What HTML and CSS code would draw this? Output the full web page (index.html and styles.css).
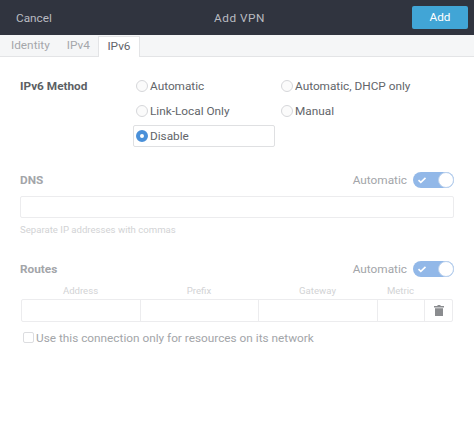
FILE: index.html
```html
<!DOCTYPE html>
<html lang="en">
<head>
<meta charset="utf-8">
<title>Add VPN</title>
<link rel="stylesheet" href="styles.css">
</head>
<body>
<header class="header">
  <span class="cancel">Cancel</span>
  <span class="title">Add VPN</span>
  <button class="add">Add</button>
</header>
<nav class="tabs">
  <span class="tab">Identity</span>
  <span class="tab">IPv4</span>
  <span class="tab active">IPv6</span>
</nav>
<main class="content">
  <section class="method">
    <div class="method-label">IPv6 Method</div>
    <div class="radios">
      <div class="radio"><i class="dot"></i>Automatic</div>
      <div class="radio"><i class="dot"></i>Automatic, DHCP only</div>
      <div class="radio"><i class="dot"></i>Link-Local Only</div>
      <div class="radio"><i class="dot"></i>Manual</div>
      <div class="radio selected"><i class="dot on"></i>Disable</div>
    </div>
  </section>
  <section class="dns">
    <div class="row-head">
      <span class="head">DNS</span>
      <span class="auto">Automatic<span class="switch"><svg class="tick" viewBox="0 0 10 8"><path d="M1.5 4.2 3.8 6.3 8.5 1.8" fill="none" stroke="#fff" stroke-width="1.6"/></svg><i class="knob"></i></span></span>
    </div>
    <div class="input"></div>
    <div class="hint">Separate IP addresses with commas</div>
  </section>
  <section class="routes">
    <div class="row-head">
      <span class="head">Routes</span>
      <span class="auto">Automatic<span class="switch"><svg class="tick" viewBox="0 0 10 8"><path d="M1.5 4.2 3.8 6.3 8.5 1.8" fill="none" stroke="#fff" stroke-width="1.6"/></svg><i class="knob"></i></span></span>
    </div>
    <div class="cols">
      <span class="c1">Address</span><span class="c2">Prefix</span><span class="c3">Gateway</span><span class="c4">Metric</span><span class="c5"></span>
    </div>
    <div class="table">
      <span class="c1"></span><span class="c2"></span><span class="c3"></span><span class="c4"></span>
      <span class="c5 trash"><svg width="10" height="11" viewBox="0 0 10 11"><path d="M3.5 0h3v1H10v1.4H0V1h3.5zM1 3.2h8V11H1z" fill="#8a8c8f"/></svg></span>
    </div>
    <label class="only"><i class="check"></i>Use this connection only for resources on its network</label>
  </section>
</main>
</body>
</html>
```
FILE: styles.css
```css
* { box-sizing: border-box; }
html, body { margin: 0; height: 100%; }
body {
  width: 474px; height: 424px; overflow: hidden; background: #fff;
  font-family: Roboto, "Open Sans", sans-serif; font-size: 11.8px; color: #62656a;
}
.header {
  height: 35px; background: #30343f; color: #b9bbc1;
  display: grid; grid-template-columns: 1fr auto 1fr; align-items: center;
  padding: 0 6px 0 16px;
}
.title { padding-right: 5px; letter-spacing: .5px; }
.add {
  justify-self: end; width: 56px; height: 23px; margin-top: -1px;
  background: #41a5d6; color: #fff; border: 0; border-radius: 2px;
  font: inherit;
}
.tabs {
  height: 22px; background: #f5f6f7; border-bottom: 1px solid #e3e4e6;
  display: flex; align-items: flex-end; padding-left: 2.5px; color: #a5a7ab;
}
.tab { height: 21px; padding: 2px 8.5px 0; line-height: 17px; }
.tab.active {
  height: 21px; margin-bottom: -1px; padding: 1px 8px 0;
  background: #fff; color: #62656a; border: 1px solid #e3e4e6; border-bottom: 0;
}
.content { padding: 0 20px; }
.method { display: flex; padding-top: 20px; }
.method-label { width: 113px; font-weight: 700; line-height: 18px; color: #5c5f64; }
.radios { display: grid; grid-template-columns: 145px auto; grid-auto-rows: 24.5px; }
.radio { display: flex; align-items: flex-start; line-height: 18px; padding-left: 3px; height: 22px; }
.radio.selected { width: 142px; border: 1px solid #dfe0e2; border-radius: 2px; margin-top: -1px; padding: 1px 0 0 2px; }
.dot { width: 12px; height: 12px; margin: 3px 2px 0 0; border-radius: 50%; border: 1px solid #d6d7da; background: #fbfbfb; }
.dot.on { background: #fff; border: 4px solid #4a90d9; }
.dns { margin-top: 20px; }
.row-head { display: flex; justify-content: space-between; align-items: center; height: 18px; }
.head { font-weight: 700; color: #a3a5a9; }
.auto { display: flex; align-items: center; color: #a3a5a9; }
.switch { position: relative; width: 41px; height: 16px; border-radius: 8px; background: #92b8e8; margin-left: 6px; display: block; }
.tick { position: absolute; left: 4px; top: 4px; width: 10px; height: 8px; }
.knob { position: absolute; right: 0; top: 0; width: 16px; height: 16px; border-radius: 50%; background: #fff; border: 1px solid #bcd2ee; }
.input { height: 22px; margin-top: 7px; border: 1px solid #ececee; border-radius: 2px; }
.hint { margin-top: 5px; font-size: 9.6px; line-height: 13px; color: #d2d3d5; }
.routes { margin-top: 24px; }
.cols { display: flex; margin: 6px 0 0 1px; font-size: 9.6px; line-height: 13px; color: #d2d3d5; text-align: center; }
.table { display: flex; height: 23px; margin: 2px 1px 0 1px; border: 1px solid #ececee; border-radius: 2px; }
.c1 { width: 119px; }
.c2 { width: 118px; }
.c3 { width: 119px; }
.c4 { width: 47px; }
.c5 { width: 27px; }
.table .c1, .table .c2, .table .c3, .table .c4 { border-right: 1px solid #ececee; }
.trash { display: flex; align-items: center; justify-content: center; }
.only { display: flex; align-items: center; margin: 7px 0 0 3px; color: #a3a5a9; line-height: 18px; }
.check { width: 11px; height: 11px; margin-right: 2px; border: 1px solid #dcdde0; border-radius: 2px; }
```
